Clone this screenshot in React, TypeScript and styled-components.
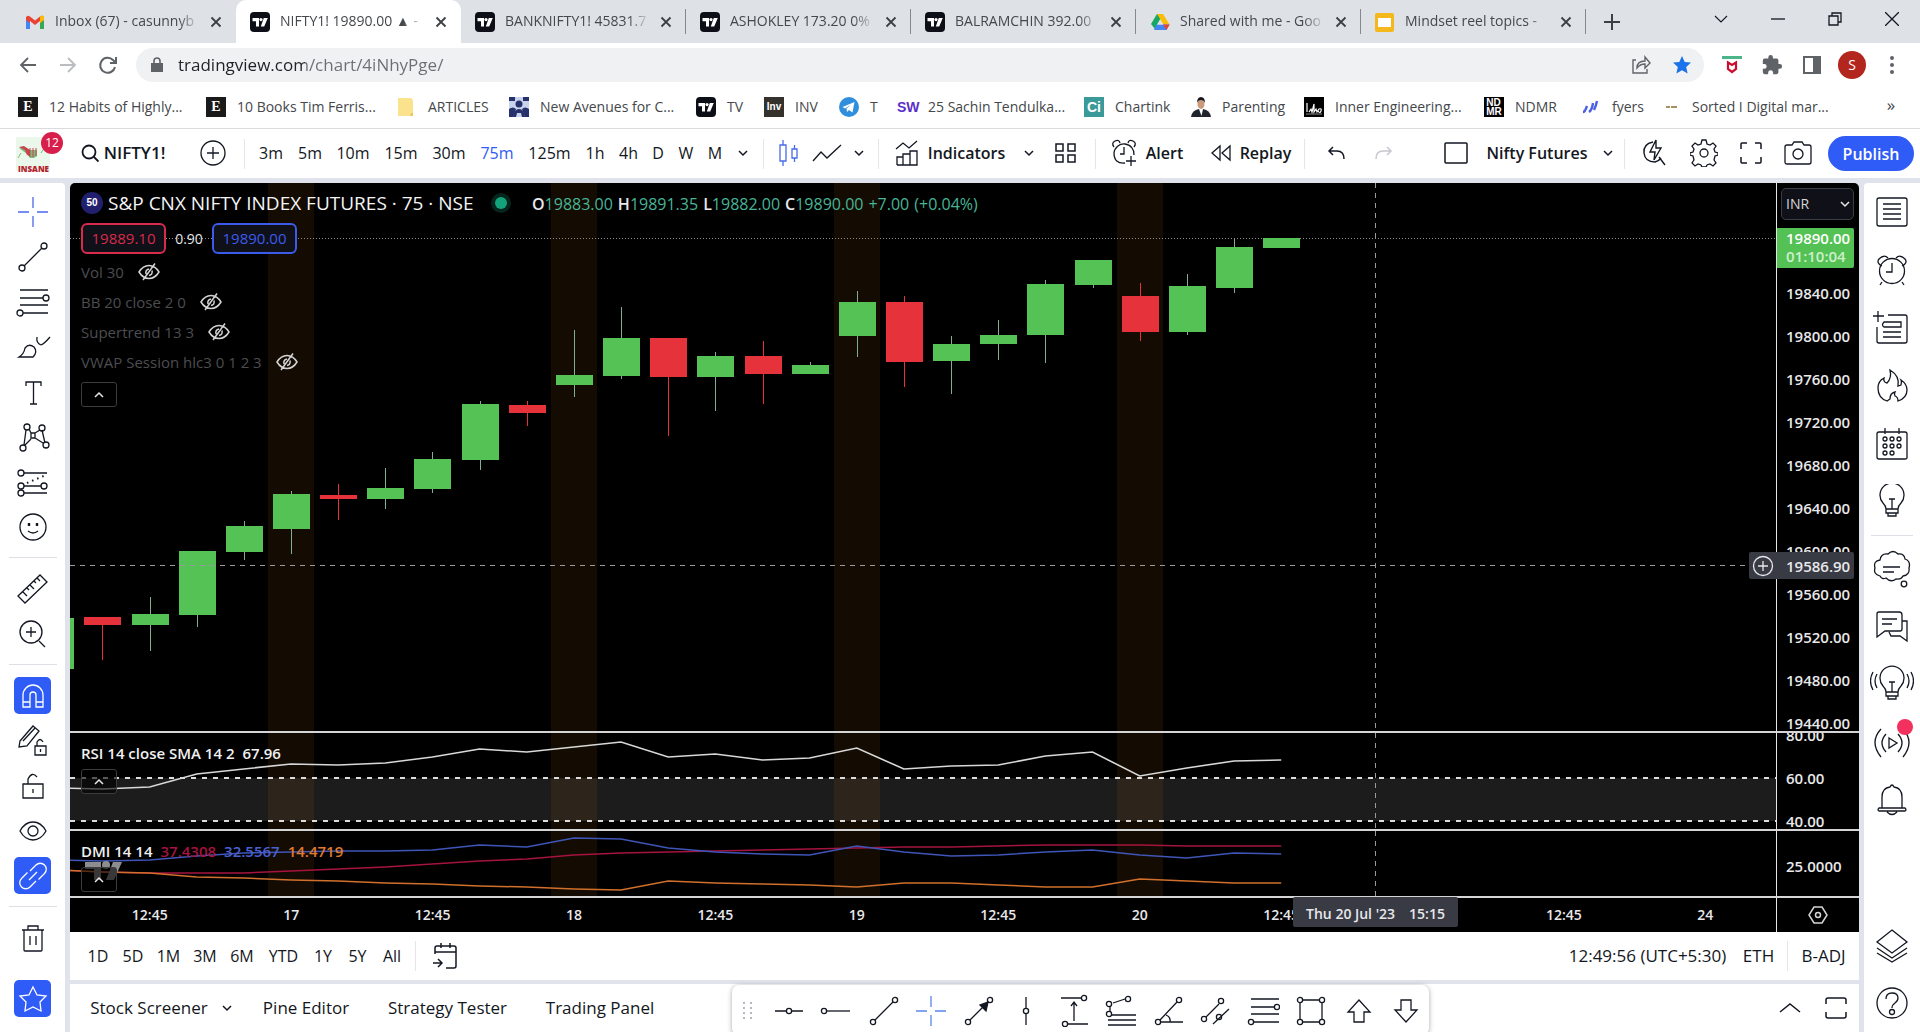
import React from 'react';
import styled, { createGlobalStyle, css } from 'styled-components';

const UI = '"Open Sans", "Noto Sans", sans-serif';
const INK = '#131722';
const BLUE = '#2f5bf6';

const Global = createGlobalStyle`
  *, *::before, *::after { box-sizing: border-box; }
  html, body, #root { height: 100%; }
  body { margin: 0; font-family: ${UI}; color: ${INK}; background: #e0e3eb; overflow: hidden; }
  button, input, select { font: inherit; color: inherit; background: none; border: 0; padding: 0; margin: 0; }
  a { color: inherit; text-decoration: none; }
  svg { display: block; flex: none; }
`;

/* ---------- icons ---------- */

type IcoProps = { w?: number; h?: number; c?: string; sw?: number; d?: string; children?: React.ReactNode };
const Ico = ({ w = 36, h = 36, c = 'currentColor', sw = 1.3, d, children }: IcoProps) => (
  <svg width={w} height={h} viewBox={`0 0 ${w} ${h}`} fill="none" stroke={c} strokeWidth={sw} aria-hidden="true">
    {d && <path d={d} />}
    {children}
  </svg>
);
const Dots = ({ at, r = 3 }: { at: number[][]; r?: number }) => (
  <>{at.map(([x, y]) => <circle key={`${x}-${y}`} cx={x} cy={y} r={r} />)}</>
);

const TvLogo = () => (
  <svg width="20" height="20" viewBox="0 0 20 20" aria-hidden="true">
    <rect width="20" height="20" rx="4" fill="#0c0f16" />
    <path d="M2.500 6h6.500v8.500H6V9.200H2.500z M13.800 6h4l-3.600 8.500h-3.400z" fill="#fff" />
    <circle cx="11" cy="7.600" r="1.600" fill="#fff" />
  </svg>
);
const Gmail = () => (
  <svg width="20" height="20" viewBox="0 0 20 20" aria-hidden="true">
    <path d="M1 5v12h4V8z" fill="#4285f4" />
    <path d="M19 5v12h-4V8z" fill="#34a853" />
    <path d="M1 8V5.500Q2 2.500 5 4.500L10 8.500l5-4q3-2 4 1V8l-4 3V9l-5 4-5-4v2z" fill="#ea4335" />
    <path d="M15 4.500q4-2.500 4 1V8l-4 3z" fill="#fbbc04" />
  </svg>
);
const Drive = () => (
  <svg width="20" height="20" viewBox="0 0 20 20" aria-hidden="true">
    <path d="M7 2h6l-2.500 5L5 17 1 12z" fill="#17a765" />
    <path d="M7 2h6l6.500 10.500h-6z" fill="#fbbc04" />
    <path d="M6.500 12.500h13L16.500 18H4z" fill="#4285f4" />
    <path d="M13 12.500h6.500L16.500 18z" fill="#ea4335" />
    <path d="M10 7.500l3 5H7z" fill="#dee1e6" />
  </svg>
);
const Slides = () => (
  <svg width="20" height="20" viewBox="0 0 20 20" aria-hidden="true">
    <rect x="0" y="1" width="19" height="19" rx="2" fill="#f4b81c" />
    <rect x="3" y="6" width="13" height="9" fill="#fff" />
  </svg>
);
const Folder = () => (
  <svg width="20" height="20" viewBox="0 0 20 20" aria-hidden="true">
    <path d="M1 1h13l2 2v13h-2v3H1z" fill="#fbe38e" />
    <path d="M14 16h2v3h-3z" fill="#e8c95c" />
  </svg>
);
const People = () => (
  <svg width="20" height="20" viewBox="0 0 20 20" aria-hidden="true">
    <rect width="20" height="20" fill="#c9d3ee" />
    <path d="M0 0h6v4H0zM14 0h6v4h-6zM0 20v-8q4-3 7 0l-3 8zM20 20v-8q-4-3-7 0l3 8z" fill="#27316b" />
    <circle cx="10" cy="7" r="3.500" fill="#27316b" /><path d="M4 20q1-8 6-8t6 8h-3l-1-4h-4l-1 4z" fill="#27316b" />
  </svg>
);
const Telegram = () => (
  <svg width="20" height="20" viewBox="0 0 20 20" aria-hidden="true">
    <circle cx="10" cy="10" r="10" fill="#2f8fdd" />
    <path d="M3.500 10L15.500 5l-2 10.500-3.500-2.500-2 2-.5-3.500 5-4-6.500 4z" fill="#fff" />
  </svg>
);
const Person = () => (
  <svg width="20" height="20" viewBox="0 0 20 20" aria-hidden="true">
    <path d="M0 20q1-7 8-8h4q7 1 8 8z" fill="#20242c" /><path d="M8 12h4l-1.500 7z" fill="#fff" />
    <ellipse cx="10" cy="7" rx="3.500" ry="5" fill="#c99a7c" /><path d="M6 6q0-6 4-6t4 6q-1-3-4-3T6 6z" fill="#15171c" />
  </svg>
);
const Isha = () => (
  <svg width="20" height="20" viewBox="0 0 20 20" aria-hidden="true">
    <rect width="20" height="20" fill="#000" />
    <path d="M3 6v9M5 15l2-3 1 3 2-8v8l2-3 1 3 2-3q3-1 2 2t-3 0" stroke="#fff" strokeWidth="1.200" fill="none" /><path d="M2 17h16" stroke="#888" />
  </svg>
);
const Fyers = () => (
  <svg width="20" height="20" viewBox="0 0 20 20" aria-hidden="true">
    <path d="M2 15q2 0 4-6M8 15q3-2 4-9M13 13q2-4 3-9" stroke="#4a5fe2" strokeWidth="2.400" fill="none" />
  </svg>
);
const Brand = () => (
  <svg width="34" height="34" viewBox="0 0 34 34" aria-hidden="true">
    <rect width="34" height="34" fill="#eaf7ea" />
    <path d="M3 11l5-1 4 3h9v6l-3 2h-4l-3-4z" fill="#7dbb7a" /><path d="M3 10l5-1 6 4v6l-3-1-2-5z" fill="#c8434d" />
    <path d="M14 11v9M17 11v9M20 11v8" stroke="#c8434d" />
    <path d="M5 16l-3 5M29 10l-4 6" stroke="#7dbb7a" />
  </svg>
);

/* ---------- browser chrome ---------- */

const Page = styled.div`display: flex; flex-direction: column; height: 100%; min-height: 1032px;`;
const TabStrip = styled.div`display: flex; align-items: stretch; height: 43px; background: #dee1e6; padding-left: 11px;`;
const Tab = styled.div<{ $on?: boolean }>`
  display: flex; align-items: center; gap: 10px; width: 225px; padding: 0 14px; position: relative;
  background: ${p => (p.$on ? '#fff' : 'transparent')};
  border-radius: 10px 10px 0 0;
  ${p => !p.$on && css`&:not(:first-child)::after { content: ''; position: absolute; right: 0; top: 9px; height: 25px; width: 1px; background: #85888d; }`}
`;
const TabTitle = styled.button`
  flex: 1; min-width: 0; overflow: hidden; white-space: nowrap; text-align: left; font-size: 14px; line-height: 24px; color: #45494d; padding-bottom: 2px;
  -webkit-mask-image: linear-gradient(90deg, #000 85%, transparent); mask-image: linear-gradient(90deg, #000 85%, transparent);
`;
const PlainBtn = styled.button`display: grid; place-items: center;`;
const NewTab = styled(PlainBtn)`width: 52px;`;
const WinControls = styled.div`margin-left: auto; display: flex; button { width: 57px; height: 37px; }`;

const AddressRow = styled.div`display: flex; align-items: center; height: 43px; background: #fff; padding: 0 8px;`;
const NavBtn = styled(PlainBtn)`width: 40px; height: 34px; color: #5f6368; &:disabled { color: #b9bcc0; }`;
const Omnibox = styled.label`
  flex: 1; display: flex; align-items: center; gap: 14px; height: 34px; margin: 0 8px; padding: 0 12px 0 14px; border-radius: 17px; background: #f0f1f3;
`;
const OmniActions = styled.span`display: flex; align-items: center; gap: 20px;`;
const UrlInput = styled.input`
  flex: 1; min-width: 0; height: 34px; font-size: 17px; outline: 0; color: transparent;
  background: linear-gradient(90deg, #202124 127px, #6b6f74 127px); -webkit-background-clip: text; background-clip: text;
`;
const Avatar = styled.button`width: 28px; height: 28px; border-radius: 50%; background: #b3261e; color: #fff; font-size: 14px; line-height: 28px; margin: 0 6px;`;

const Bookmarks = styled.nav`display: flex; align-items: center; height: 43px; padding: 0 0 1px 18px; background: #fff; border-bottom: 1px solid #d9dbdf;`;
const Bookmark = styled.a<{ $w: number }>`
  display: flex; align-items: center; gap: 11px; width: ${p => p.$w}px; flex: none; white-space: nowrap; font-size: 14px; line-height: 20px; color: #44474b;
`;
const LetterIcon = styled.span<{ $bg: string; $c?: string; $serif?: boolean; $small?: boolean }>`
  display: grid; place-items: center; align-content: center; width: 20px; height: 20px; background: ${p => p.$bg}; color: ${p => p.$c || '#fff'};
  font: bold ${p => (p.$small ? 10 : 14)}px / ${p => (p.$small ? 9 : 20)}px ${p => (p.$serif ? '"Liberation Serif", serif' : '"Liberation Sans", sans-serif')};
`;
const More = styled(PlainBtn)`margin-left: auto; width: 58px; font-size: 17px; line-height: 20px; padding-bottom: 3px; color: #44474b;`;

/* ---------- trading app ---------- */

const Workspace = styled.div`flex: 1; min-height: 0; display: flex; flex-direction: column;`;
const TopBar = styled.header`display: flex; align-items: center; height: 49px; background: #fff; margin-bottom: 5px; padding-right: 6px;`;
const Cell = styled.button<{ $w: number; $on?: boolean; $big?: boolean; $tight?: boolean }>`
  display: flex; align-items: center; justify-content: center; gap: ${p => (p.$tight ? 5 : 9)}px; flex: none; width: ${p => p.$w}px; height: 42px; padding-bottom: 1px; white-space: nowrap;
  font-size: ${p => (p.$big ? 17 : 16)}px; line-height: 24px; color: ${p => (p.$on ? BLUE : INK)};
  &:disabled { color: #c5c8d0; }
`;
const Strong = styled.span`font-weight: 600;`;
const Rule = styled.span<{ $gap?: boolean }>`width: 1px; height: 30px; flex: none; background: #e4e6ec; margin-left: ${p => (p.$gap ? 6 : 0)}px;`;
const Grow = styled.span`flex: 1;`;
const BrandBtn = styled.button`position: relative; width: 64px; height: 40px; padding-left: 16px; text-align: left; flex: none;`;
const BrandName = styled.span`position: absolute; left: 18px; bottom: 1px; font-size: 8px; line-height: 8px; font-weight: 800; color: #b3202c;`;
const Badge = styled.span`
  position: absolute; left: 41px; top: -2px; width: 22px; height: 22px; border-radius: 50%; background: #d81e4a; color: #fff;
  font-size: 12px; line-height: 22px; text-align: center;
`;
const Publish = styled.button`height: 35px; width: 86px; border-radius: 18px; background: ${BLUE}; color: #fff; font-size: 16px; font-weight: 600; flex: none; margin-left: 9px;`;

const Body = styled.div`flex: 1; min-height: 0; display: flex; gap: 5px;`;
const LeftBar = styled.aside`width: 65px; flex: none; background: #fff; display: flex; flex-direction: column; align-items: center; padding: 6px 0 11px; border-top-right-radius: 4px;`;
const Tool = styled.button<{ $on?: boolean; $c?: string }>`
  flex: none; height: 45px; width: 37px; display: grid; place-items: center; color: ${p => (p.$on ? '#fff' : p.$c || INK)};
  span { display: grid; place-items: center; width: 37px; height: 37px; border-radius: 5px; background: ${p => (p.$on ? BLUE : 'none')}; }
`;
const HRule = styled.hr`width: 48px; height: 1px; border: 0; margin: 8px 0; background: #dcdfe5; flex: none;`;
const SideRule = styled(HRule)`width: 42px; margin: 4px 0;`;
const RightBar = styled.aside`width: 56px; flex: none; background: #fff; display: flex; flex-direction: column; align-items: center; border-top-left-radius: 4px;`;
const SideBtn = styled.button`position: relative; flex: none; height: 58px; width: 56px; display: grid; place-items: center;`;
const LiveDot = styled.i`position: absolute; right: 7px; top: 5px; width: 16px; height: 16px; border-radius: 50%; background: #f2315f;`;

const Center = styled.main`flex: 1; min-width: 0; display: flex; flex-direction: column;`;
const Chart = styled.section`
  flex: 1; min-height: 0; display: grid; grid-template-columns: minmax(0, 1fr) 83px; grid-template-rows: minmax(0, 1fr) 98px 67px 34px;
  background: #000; color: #e8e8ea; border-radius: 5px 5px 0 0; overflow: hidden; position: relative;
`;
const Pane = styled.div`position: relative; overflow: hidden; border-bottom: 2px solid #d5d5d7;`;
const Axis = styled.div`border-left: 1px solid #e4e4e6; border-bottom: 2px solid #d5d5d7; overflow: hidden; font-size: 15px; line-height: 43px;`;
const RsiAxis = styled(Axis)`padding-top: 24px; > :first-child { margin-top: -43px; }`;
const Plot = styled.svg`position: absolute; inset: 0; width: 100%; height: 100%;`;
const AxisRow = styled.div<{ $tall?: boolean }>`height: 43px; padding-left: 9px; font-weight: 600; line-height: ${p => (p.$tall ? 70 : 43)}px;`;
const Currency = styled.label`display: block; height: 32px; margin: 5px 5px 8px 4px; position: relative; svg { position: absolute; right: 3px; top: 10px; pointer-events: none; }`;
const CurrencySelect = styled.select`
  display: block; appearance: none; width: 100%; height: 32px; border: 1px solid #3a3d47; border-radius: 5px; background: #0f1018; color: #d5d6da; padding-left: 4px; font-size: 14px; line-height: 20px;
`;
const LastPrice = styled.div`height: 40px; margin: 0 5px 4px 0; padding: 1px 0 0 9px; background: #53c153; color: #fff; font-weight: 600; line-height: 18px; border-radius: 0 2px 2px 0; div + div { color: #cdf0cd; }`;
const Legend = styled.div`position: relative; padding: 4px 0 0 11px; display: flex; flex-direction: column; align-items: flex-start;`;
const LegendTop = styled.div`display: flex; align-items: center; height: 32px;`;
const Fifty = styled.span`width: 22px; height: 22px; border-radius: 50%; background: #221f6e; color: #fff; font: bold 10px/22px "Liberation Sans", sans-serif; text-align: center;`;
const Title = styled.h1`margin: 0 0 0 5px; font-size: 19px; line-height: 30px; font-weight: 500; color: #f4f4f6; width: 387px; white-space: nowrap;`;
const Status = styled.i`width: 12px; height: 12px; border-radius: 50%; background: #12a37a; box-shadow: 0 0 0 4px #06261d; margin-right: 25px;`;
const Ohlc = styled.div`display: flex; gap: 5px; font-size: 16px; line-height: 20px; color: #47b596; white-space: nowrap; padding-top: 2px; b { font-weight: 600; color: #e8e8ea; }`;
const Quote = styled.div`display: flex; align-items: center; height: 38px; font-size: 15px; color: #e4e4e6; > span { width: 46px; text-align: center; font-size: 14px; }`;
const QuoteBox = styled.button<{ $c: string }>`width: 85px; height: 31px; border: 2px solid ${p => p.$c}; border-radius: 6px; background: #0f1018; color: ${p => p.$c}; font-size: 15px; line-height: 24px;`;
const Study = styled.div`display: flex; align-items: center; gap: 14px; height: 30px; font-size: 15px; color: #4c4d50; > svg { color: #d4d4d6; }`;
const Collapse = styled.button`display: grid; place-items: center; width: 36px; height: 25px; border: 1px solid #3b3c40; border-radius: 3px; background: rgba(0,0,0,.6); color: #e8e8ea; margin-top: 5px;`;
const SubLegend = styled.div`position: relative; padding: 9px 0 0 11px; font-size: 15px; line-height: 22px; font-weight: 600; color: #f0f0f2; white-space: nowrap;`;
const Num = styled.span<{ $c?: string }>`margin-left: 8px; color: ${p => p.$c || 'inherit'};`;
const DmiMark = styled.svg`position: absolute; left: 15px; top: 30px;`;
const TimeAxis = styled.div`display: flex; padding-left: 9px; font-size: 14px; line-height: 34px; font-weight: 600; span { flex: 1; text-align: center; }`;
const AxisCorner = styled.div`border-left: 1px solid #e4e4e6; display: grid; place-items: center; color: #d5d5d7;`;
const CrossPrice = styled.div`
  position: absolute; right: 5px; top: 369px; width: 105px; height: 27px; display: flex; align-items: center; gap: 10px; background: #383a44; font-size: 15px; line-height: 24px; font-weight: 600; border-radius: 2px;
  button { width: 27px; height: 27px; }
`;
const CrossTime = styled.div`position: absolute; left: 1223px; top: 714px; width: 165px; height: 30px; background: #383a44; border-radius: 2px; display: flex; justify-content: center; gap: 14px; font-size: 14px; line-height: 34px; font-weight: 600;`;

const RangeBar = styled.div`display: flex; align-items: center; height: 48px; background: #fff; padding-left: 10px;`;
const Bottom = styled.footer`position: relative; display: flex; align-items: center; height: 48px; margin-top: 4px; background: #fff; padding-left: 13px;`;
const Floating = styled.div`
  position: absolute; left: 662px; top: 1px; width: 697px; height: 50px; padding-left: 6px; background: #fff; border-radius: 7px; box-shadow: 0 1px 5px rgba(0,0,0,.35);
  display: flex; align-items: center;
`;
const FloatBtn = styled(PlainBtn)<{ $c?: string }>`flex: 1; height: 46px; color: ${p => p.$c || INK};`;
const Grip = styled.span`width: 26px; display: grid; place-items: center start; padding-left: 4px;`;

const Chev = ({ up = false }: { up?: boolean }) => <Ico w={12} h={12} sw={1.5} d={up ? 'M2 8l4-4 4 4' : 'M2 4l4 4 4-4'} />;
const Cross = () => <Ico w={12} h={12} c="#3c4043" sw={1.8} d="M1.500 1.500l9 9M10.500 1.500l-9 9" />;
const HiddenEye = () => <Ico w={22} h={20} sw={1.5} d="M1 10q4-6.500 10-6.500t10 6.500q-4 6.500-10 6.500T1 10z M5 18L17 1.500M8 12q-1-4 3-5M14 8.500q1 4-3 5" />;

/* ---------- chart data ---------- */

const STEP = 47.15;
const cx = (i: number) => 291 + i * STEP;
/* [slot, body top, body bottom, high, low, up] */
const candles: [number, number, number, number, number, boolean][] = [
  [-5, 618, 669, 618, 669, true], [-4, 617, 625, 617, 660, false], [-3, 614, 625, 597, 651, true], [-2, 551, 615, 551, 627, true],
  [-1, 526, 552, 521, 560, true], [0, 494, 529, 491, 554, true], [1, 495, 499, 484, 520, false], [2, 488, 499, 468, 509, true],
  [3, 459, 489, 452, 493, true], [4, 404, 460, 401, 470, true], [5, 405, 413, 401, 426, false], [6, 375, 385, 330, 397, true],
  [7, 338, 376, 307, 379, true], [8, 338, 377, 338, 436, false], [9, 356, 377, 352, 411, true], [10, 356, 374, 341, 404, false],
  [11, 365, 374, 362, 374, true], [12, 302, 336, 291, 357, true], [13, 302, 362, 296, 387, false], [14, 344, 361, 336, 394, true],
  [15, 335, 344, 320, 360, true], [16, 284, 335, 280, 363, true], [17, 260, 285, 260, 288, true], [18, 296, 332, 283, 341, false],
  [19, 286, 332, 274, 335, true], [20, 247, 288, 239, 293, true], [21, 238, 248, 238, 248, true],
];
const rsi = [788, 789, 787, 774, 769, 764, 765, 763, 757, 749, 752, 747, 742, 757, 754, 760, 758, 748, 769, 766, 765, 756, 752, 776, 768, 761, 760];
const plus = [860, 861, 860, 856, 853, 852, 851, 851, 850, 845, 847, 838, 839, 848, 852, 854, 855, 846, 852, 856, 855, 852, 850, 855, 858, 853, 854];
const adx = [870, 872, 873, 873, 873, 871, 869, 867, 864, 861, 859, 855, 853, 852, 851, 850, 849, 848, 847, 847, 846, 845, 845, 845, 846, 846, 846];
const minus = [870, 872, 873, 877, 878, 880, 881, 883, 884, 886, 887, 889, 890, 881, 883, 884, 885, 887, 883, 883, 885, 887, 887, 879, 881, 883, 883];
const line = (ys: number[]) => ys.map((y, i) => `${cx(i - 5).toFixed(1)},${y}`).join(' ');
const Sessions = () => <>{[0, 6, 12, 18].map(i => <rect key={i} x={Math.round(cx(i)) - 23} y="0" width="46" height="1000" fill="#ff9a1f" fillOpacity=".08" />)}</>;

const prices = ['19840.00', '19800.00', '19760.00', '19720.00', '19680.00', '19640.00', '19600.00', '19560.00', '19520.00', '19480.00', '19440.00'];
const times = ['12:45', '17', '12:45', '18', '12:45', '19', '12:45', '20', '12:45', '', '12:45', '24'];

const tabs = [
  { icon: <Gmail />, t: 'Inbox (67) - casunnyb' }, { icon: <TvLogo />, t: 'NIFTY1! 19890.00 ▲ -', on: true },
  { icon: <TvLogo />, t: 'BANKNIFTY1! 45831.7' }, { icon: <TvLogo />, t: 'ASHOKLEY 173.20 0%' }, { icon: <TvLogo />, t: 'BALRAMCHIN 392.00' },
  { icon: <Drive />, t: 'Shared with me - Goo' }, { icon: <Slides />, t: 'Mindset reel topics -' },
];
const marks: [React.ReactNode, string, number][] = [
  [<LetterIcon $bg="#1a1a1a" $serif>E</LetterIcon>, '12 Habits of Highly...', 188],
  [<LetterIcon $bg="#1a1a1a" $serif>E</LetterIcon>, '10 Books Tim Ferris...', 191],
  [<Folder />, 'ARTICLES', 112], [<People />, 'New Avenues for C...', 187], [<TvLogo />, 'TV', 68],
  [<LetterIcon $bg="#35322e" $small>Inv</LetterIcon>, 'INV', 75], [<Telegram />, 'T', 58],
  [<LetterIcon $bg="none" $c="#5b2fc9">SW</LetterIcon>, '25 Sachin Tendulka...', 187], [<LetterIcon $bg="#3a9a9a">Ci</LetterIcon>, 'Chartink', 107],
  [<Person />, 'Parenting', 113], [<Isha />, 'Inner Engineering...', 180], [<LetterIcon $bg="#000" $small>ND<br />MR</LetterIcon>, 'NDMR', 97],
  [<Fyers />, 'fyers', 80], [<Ico w={20} h={20} c="#a89060" sw={2} d="M5 10h4M10 10h6" />, 'Sorted I Digital mar...', 180],
];

const cross = 'M18 3v11M18 22v11M3 18h11M22 18h11';
const bulb = 'M12 25q0-3-3-6a12 12 0 1 1 18 0q-3 3-3 6zM12 25h12v4H12zM14 29v3h8v-3M15 15h6M18 15v10';

const tools: { n: string; d?: string; dots?: number[][]; on?: boolean; c?: string; extra?: React.ReactNode; rule?: boolean }[] = [
  { n: 'Cross', d: cross, c: '#4a6ae8' },
  { n: 'Trend line', d: 'M9 27L27 9', dots: [[7, 29], [29, 7]] },
  { n: 'Fibonacci', d: 'M5 6h28M5 14h23M5 21h28M8 29h25', dots: [[31, 14], [5, 29]] },
  { n: 'Brush', d: 'M4 28q5-3 6-9 4-5 9-1 4 5-1 10zM22 8q-1 6 4 8M26 16q3-1 9-8' },
  { n: 'Text', d: 'M11 12V8h15v4M18.500 8v22M15 30h7' },
  { n: 'Patterns', d: 'M11 11l-2 15M27 11l3 13M14 10l2 4M25 11l-5 3M10 26l6-6M28 24l-8-5M16 14h4v5h-4z', dots: [[12, 8], [27, 9], [8, 29], [31, 26]] },
  { n: 'Forecast', d: 'M9 9h23M9 22h17M9 29h23', dots: [[6, 9], [6, 22], [29, 22], [6, 29]], extra: <path d="M12 19L31 11" strokeDasharray="1.500 4" strokeWidth="2" /> },
  { n: 'Icons', d: 'M13 22q5 4 10 0', dots: [], extra: <><circle cx="18" cy="18" r="13" /><path d="M14 14v3M22 14v3" strokeWidth="2.400" /></>, rule: true },
  { n: 'Measure', d: 'M3 25L25 4l7 7L10 32zM8 21l4 4M12 17l2 2M15 14l4 4M19 10l2 2M22 7l3 3' },
  { n: 'Zoom in', d: 'M24 25l6 6M16 11v10M11 16h10', extra: <circle cx="16" cy="16" r="11" />, rule: true },
  { n: 'Magnet', on: true, d: 'M8 29V17a10 10 0 0 1 20 0v12h-7V17a3 3 0 0 0-6 0v12zM8 24h7M21 24h7' },
  { n: 'Stay in drawing mode', d: 'M5 18L18 3l6 5-12 15-8 1zM8 18L20 5M20 23h11v9H20zM22 23v-4q3-5 6 0M25.500 26v3' },
  { n: 'Lock all', d: 'M8 16h20v14H8zM13 16v-5q4-8 9-2M18 21v4' },
  { n: 'Hide all', d: 'M5 18q5-9 13-9t13 9q-5 9-13 9T5 18z', extra: <circle cx="18" cy="18" r="5" /> },
  { n: 'Link', on: true, d: 'M15 13l6-6a6 6 0 0 1 8.500 8.500l-6 6M21 23l-6 6a6 6 0 0 1-8.500-8.500l6-6M14 22l8-8', rule: true },
];

const floats: [string, string, number[][]][] = [
  ['Horizontal line', 'M4 18h11M21 18h11', [[18, 18]]],
  ['Horizontal ray', 'M9 18h23', [[6, 18]]],
  ['Trend line', 'M9 27L27 9', [[7, 29], [29, 7]]],
  ['Cross', cross, []],
  ['Arrow', 'M9 27L27 9', [[7, 29], [29, 7]]],
  ['Vertical line', 'M18 4v11M18 21v11', [[18, 18]]],
  ['Price range', 'M5 5h20M12 31h20M18 10v18M15 13l3-4 3 4', [[28, 5], [9, 31]]],
  ['Fib extension', 'M10 10l12-4M7 13v6M9 22h24M5 27h28M5 32h28', [[25, 6], [6, 11], [6, 21]]],
  ['Angle', 'M9 27L26 9M9 29h23M15 22q5 2 4 7', [[7, 29], [28, 7]]],
  ['Channel', 'M8 24L21 11M15 31L31 16', [[6, 26], [23, 8], [21, 24]]],
  ['Fib retracement', 'M5 6h28M5 14h23M5 21h28M8 29h25', [[31, 14], [5, 29]]],
  ['Rectangle', 'M10 7h16M10 29h16M7 10v16M29 10v16', [[7, 7], [29, 7], [7, 29], [29, 29]]],
  ['Arrow up', 'M18 7l11 12h-6v10H13V19H7z', []],
  ['Arrow down', 'M18 29l11-12h-6V7H13v10H7z', []],
];

const side: [string, React.ReactNode][] = [
  ['Watchlist', <Ico d="M5 4h26q2 0 2 2v24q0 2-2 2H5q-2 0-2-2V6q0-2 2-2zM9 10h18M9 15h18M9 20h18M9 25h18" />],
  ['Alerts', <Ico d="M18 11v9h-6M8 30l-2 3M28 30l2 3M8 14q-6-3-3-7 5-5 9-1M28 14q6-3 3-7-5-5-9-1"><circle cx="18" cy="19" r="12.500" /></Ico>],
  ['Data window', <Ico w={44} d="M18 5h17q2 0 2 2v24q0 2-2 2H9q-2 0-2-2V17M8 1v11M3 6h11M14 12h17v5H14q-3-2 0-5zM13 22h18M13 27h18" />],
  ['Hotlists', <Ico d="M13 33Q4 30 4 20q0-7 6-10-1 4 3 5 5-5 3-13 10 6 8 16l3-1q1-3 0-5 6 4 6 10 0 8-9 11 0-4-3-5-1-2 0-4-5 1-5 7z" />],
  ['Calendar', <Ico d="M5 6h26q2 0 2 2v24q0 1-2 1H5q-2 0-2-2V8q0-2 2-2zM11 2v6M25 2v6"><Dots r={2} at={[[11, 13], [18, 13], [25, 13], [11, 20], [18, 20], [25, 20], [11, 27], [18, 27]]} /></Ico>],
  ['Ideas', <Ico d={bulb} />],
];
const side2: [string, React.ReactNode][] = [
  ['Minds', <Ico w={40} h={40} d="M14 29q-4 2-6-2-7-2-5-8-2-7 5-8 1-7 8-6 5-5 10 0 6-1 7 5 6 2 4 9 1 7-6 8-2 4-7 3-5 4-10-1zM11 18h17M11 23h11"><circle cx="32" cy="35" r="2.800" /></Ico>],
  ['Chats', <Ico d="M5 3h20q3 0 3 3v14q0 2-2 2H11l-8 6V5q0-2 2-2zM8 10h15M8 15h10M28 12h5v20l-7-5H17l-2-4" />],
  ['Idea stream', <Ico w={44} h={40} d="M16 27q0-3-3-6a12 12 0 1 1 18 0q-3 3-3 6zM16 27h12v4H16zM18 31v3h8v-3M19 17h6M22 17v10M7 9q-4 7 0 14M3 7q-5 9 0 18M37 9q4 7 0 14M41 7q5 9 0 18" />],
  ['Live streams', <Ico w={44} h={40} d="M11 6q-12 13 0 28M16 11q-8 9 0 18M33 6q12 13 0 28M28 11q8 9 0 18M19 15l8 5-8 5z" />],
  ['Notifications', <Ico d="M8 25V14q0-9 8-10 2-4 4 0 8 1 8 10v11M5 25h26q2 2 0 3H5q-2-1 0-3zM13 29q5 5 10 0" />],
];

export default function App() {
  return (
    <Page>
      <Global />
      <TabStrip>
        {tabs.map(t => (
          <Tab key={t.t} $on={t.on}>{t.icon}<TabTitle>{t.t}</TabTitle><PlainBtn aria-label="Close tab"><Cross /></PlainBtn></Tab>
        ))}
        <NewTab aria-label="New tab"><Ico w={16} h={16} c="#3c4043" sw={2} d="M8 0v16M0 8h16" /></NewTab>
        <WinControls>
          <PlainBtn aria-label="Search tabs"><Ico w={14} h={12} sw={1.1} d="M1 3l6 6 6-6" /></PlainBtn>
          <PlainBtn aria-label="Minimize"><Ico w={14} h={12} d="M0 6h14" /></PlainBtn>
          <PlainBtn aria-label="Restore"><Ico w={14} h={14} d="M1 4h9v9H1zM4 4V1h9v9h-3" /></PlainBtn>
          <PlainBtn aria-label="Close"><Ico w={14} h={14} d="M0 0l14 14M14 0L0 14" /></PlainBtn>
        </WinControls>
      </TabStrip>
      <AddressRow>
        <NavBtn aria-label="Back"><Ico w={20} h={20} sw={1.8} d="M18 10H3M10 3l-7 7 7 7" /></NavBtn>
        <NavBtn aria-label="Forward" disabled><Ico w={20} h={20} sw={1.8} d="M2 10h15M10 3l7 7-7 7" /></NavBtn>
        <NavBtn aria-label="Reload"><Ico w={20} h={20} sw={2} d="M17 12a7.500 7.500 0 1 1-2-7l3 3M18 2v6h-6" /></NavBtn>
        <Omnibox>
          <svg width="14" height="16" viewBox="0 0 14 16" aria-hidden="true"><path d="M1 6h12v9H1z" fill="#5f6368" /><path d="M4 6V4a3 3 0 0 1 6 0v2" fill="none" stroke="#5f6368" strokeWidth="1.600" /></svg>
          <UrlInput aria-label="Address" defaultValue="tradingview.com/chart/4iNhyPge/" />
          <OmniActions>
            <Ico w={20} h={20} c="#5f6368" sw={1.4} d="M4 5H1v13h14v-4M5 13q0-7 8-7V2l5 6-5 5V9q-5 0-8 4z" />
            <svg width="20" height="20" viewBox="0 0 20 20" aria-hidden="true"><path d="M10 1l2.700 6 6.300.6-4.800 4.400 1.400 6.500L10 15.200 4.400 18.500 5.800 12 1 7.600 7.300 7z" fill="#1a73e8" /></svg>
          </OmniActions>
        </Omnibox>
        <NavBtn aria-label="McAfee">
          <svg width="20" height="24" viewBox="0 0 20 24" aria-hidden="true"><path d="M0 3h20v3H0z" fill="#4db58a" /><path d="M6 9.500l4 2.500 4-2.500V16l-4 3-4-3z" fill="none" stroke="#c8102e" strokeWidth="2.200" /></svg>
        </NavBtn>
        <NavBtn aria-label="Extensions">
          <svg width="22" height="22" viewBox="0 0 24 24" aria-hidden="true"><path d="M20.500 11H19V7a2 2 0 0 0-2-2h-4V3.500a2.500 2.500 0 0 0-5 0V5H4a2 2 0 0 0-2 2v3.800h1.500a2.700 2.700 0 0 1 0 5.400H2V20a2 2 0 0 0 2 2h3.800v-1.500a2.700 2.700 0 0 1 5.400 0V22H17a2 2 0 0 0 2-2v-4h1.500a2.500 2.500 0 0 0 0-5z" fill="#5f6368" /></svg>
        </NavBtn>
        <NavBtn aria-label="Side panel">
          <svg width="20" height="20" viewBox="0 0 20 20" aria-hidden="true"><path d="M2 2h16v16H2z" fill="none" stroke="#5f6368" strokeWidth="2" /><path d="M11 2h7v16h-7z" fill="#5f6368" /></svg>
        </NavBtn>
        <Avatar aria-label="Profile">S</Avatar>
        <NavBtn aria-label="Menu"><svg width="6" height="20" viewBox="0 0 6 20" fill="#5f6368" aria-hidden="true"><circle cx="3" cy="3" r="2" /><circle cx="3" cy="10" r="2" /><circle cx="3" cy="17" r="2" /></svg></NavBtn>
      </AddressRow>
      <Bookmarks aria-label="Bookmarks">
        {marks.map(([ic, t, w]) => <Bookmark key={t} href="#" $w={w}>{ic}{t}</Bookmark>)}
        <More aria-label="More bookmarks">»</More>
      </Bookmarks>

      <Workspace>
        <TopBar>
          <BrandBtn aria-label="Account"><Brand /><BrandName>INSANE</BrandName><Badge>12</Badge></BrandBtn>
          <Cell $w={118} $tight $big><Ico w={18} h={20} sw={1.8} d="M12.500 13.500l5 5"><circle cx="8" cy="9" r="6.500" /></Ico><Strong>NIFTY1!</Strong></Cell>
          <Cell $w={62} aria-label="Compare"><Ico w={26} h={26} d="M13 7v12M7 13h12"><circle cx="13" cy="13" r="12" /></Ico></Cell>
          <Rule />
          <Cell $w={52}>3m</Cell><Cell $w={26}>5m</Cell><Cell $w={60}>10m</Cell><Cell $w={36}>15m</Cell><Cell $w={60}>30m</Cell>
          <Cell $w={36} $on>75m</Cell><Cell $w={69}>125m</Cell><Cell $w={22}>1h</Cell><Cell $w={45}>4h</Cell><Cell $w={14}>D</Cell>
          <Cell $w={42}>W</Cell><Cell $w={16}>M</Cell><Cell $w={40} aria-label="Intervals"><Chev /></Cell>
          <Rule />
          <Cell $w={50} aria-label="Candles"><Ico w={20} h={28} c="#4a6ae8" d="M1 6h6v16H1zM4 1v5M4 22v5M13 10h5v9h-5zM15.500 6v4M15.500 19v4" /></Cell>
          <Cell $w={26} aria-label="Line style"><Ico w={30} h={20} d="M1 18l8-9 6 6L29 2" /></Cell>
          <Cell $w={38} aria-label="Chart types"><Chev /></Cell>
          <Rule />
          <Cell $w={142}><Ico w={24} h={26} d="M1 9l7-6 6 5 8-7M2 25v-8h6v8M8 25V14h7v11M15 25V11h7v14zM2 25h20" /><Strong>Indicators</Strong></Cell>
          <Cell $w={16} aria-label="Favorite indicators"><Chev /></Cell>
          <Cell $w={58} aria-label="Templates"><Ico w={22} h={22} sw={1.5} d="M1 2h7v7H1zM13 2h7v7h-7zM1 13h7v7H1zM13 13h7v7h-7z" /></Cell>
          <Rule />
          <Cell $w={102}><Ico w={26} h={28} d="M13 8v7H9M14 24q-11 1-11-10a10 10 0 0 1 20 2M3 8q-3-4 1-6 4-2 5 2M23 8q3-4-1-6-4-2-5 2M20 17v10M15 22h10" /><Strong>Alert</Strong></Cell>
          <Cell $w={106}><Ico w={20} h={20} d="M9 3v14l-8-7zM19 3v14l-8-7z" /><Strong>Replay</Strong></Cell>
          <Rule />
          <Cell $w={62} aria-label="Undo"><Ico w={18} h={18} sw={1.5} d="M6 3L2 7l4 4M2 7h8q7 0 7 8" /></Cell>
          <Cell $w={34} aria-label="Redo" disabled><Ico w={18} h={18} sw={1.5} d="M12 3l4 4-4 4M16 7H8q-7 0-7 8" /></Cell>
          <Grow />
          <Cell $w={52} aria-label="Layout"><Ico w={26} h={26} sw={1.5} d="M3 3h20q1 0 1 1v18q0 1-1 1H3q-1 0-1-1V4q0-1 1-1z" /></Cell>
          <Cell $w={110}><Strong>Nifty Futures</Strong></Cell>
          <Cell $w={32} aria-label="Layouts"><Chev /></Cell>
          <Rule />
          <Cell $w={58} aria-label="Quick search"><Ico w={26} h={28} sw={1.4} d="M12 3Q2 5 3 14t11 9q4-1 6-4M18 18l6 8M15 1L9 13h5l-1 8 7-12h-5z" /></Cell>
          <Cell $w={42} aria-label="Settings"><Ico w={28} h={28} d="M12 1h4l1 4 3 1 3-2 3 3-2 3 1 3 3 1v2l-3 1-1 4 2 3-3 3-3-2-3 1-1 2h-4l-1-2-3-1-3 2-3-3 2-3-1-4-3-1v-2l3-1 1-3-2-3 3-3 3 2 3-1z"><circle cx="14" cy="14" r="4" /></Ico></Cell>
          <Cell $w={52} aria-label="Fullscreen"><Ico w={24} h={24} sw={1.5} d="M2 8V3q0-1 1-1h5M16 2h5q1 0 1 1v5M22 16v5q0 1-1 1h-5M8 22H3q-1 0-1-1v-5" /></Cell>
          <Cell $w={42} aria-label="Snapshot"><Ico w={28} h={26} d="M3 5h5l2-3h8l2 3h5q2 0 2 2v15q0 2-2 2H3q-2 0-2-2V7q0-2 2-2z"><circle cx="14" cy="14" r="5" /></Ico></Cell>
          <Publish>Publish</Publish>
        </TopBar>

        <Body>
          <LeftBar>
            {tools.map(t => (
              <React.Fragment key={t.n}>
                <Tool aria-label={t.n} $on={t.on} $c={t.c}><span><Ico d={t.d}>{t.dots && <Dots at={t.dots} />}{t.extra}</Ico></span></Tool>
                {t.rule && <HRule />}
              </React.Fragment>
            ))}
            <Tool aria-label="Remove drawings"><span><Ico d="M7 10h22M13 10V6h10v4M9 10v20q0 1 1 1h16q1 0 1-1V10M15 16v9M21 16v9" /></span></Tool>
            <Grow />
            <Tool aria-label="Favorites toolbar" $on><span><Ico d="M18 6l4 8 9 1-6 6 1 9-8-4-8 4 1-9-6-6 9-1z" /></span></Tool>
          </LeftBar>

          <Center>
            <Chart>
              <Pane>
                <Plot>
                  <g transform="translate(-70 -183)">
                    <Sessions />
                    <path d="M70 238.500H1800" stroke="#8d8d8d" strokeDasharray="1 2" />
                    {candles.map(([i, t, b, h, l, up]) => (
                      <g key={i} fill={up ? '#54c254' : '#e6323a'}>
                        <rect x={Math.round(cx(i))} y={h} width="1" height={l - h} fill={up ? '#7fae93' : '#e6323a'} />
                        <rect x={Math.round(cx(i)) - 18} y={t} width="37" height={b - t} />
                      </g>
                    ))}
                    <path d="M70 565.500H1776M1375.500 183V740" stroke="#9a9a9c" strokeDasharray="5 5" />
                  </g>
                </Plot>
                <Legend>
                  <LegendTop>
                    <Fifty>50</Fifty><Title>S&amp;P CNX NIFTY INDEX FUTURES · 75 · NSE</Title><Status />
                    <Ohlc>
                      <span><b>O</b>19883.00</span><span><b>H</b>19891.35</span><span><b>L</b>19882.00</span><span><b>C</b>19890.00</span><span>+7.00</span><span>(+0.04%)</span>
                    </Ohlc>
                  </LegendTop>
                  <Quote><QuoteBox $c="#d92b4b">19889.10</QuoteBox><span>0.90</span><QuoteBox $c="#3c5bea">19890.00</QuoteBox></Quote>
                  {['Vol 30', 'BB 20 close 2 0', 'Supertrend 13 3', 'VWAP Session hlc3 0 1 2 3'].map(s => <Study key={s}>{s}<HiddenEye /></Study>)}
                  <Collapse aria-label="Collapse legend"><Chev up /></Collapse>
                </Legend>
              </Pane>
              <Axis>
                <Currency>
                  <CurrencySelect aria-label="Currency" defaultValue="INR"><option>INR</option></CurrencySelect><Chev />
                </Currency>
                <LastPrice><div>19890.00</div><div>01:10:04</div></LastPrice>
                {prices.map(p => <AxisRow key={p}>{p}</AxisRow>)}
              </Axis>

              <Pane>
                <Plot>
                  <g transform="translate(-70 -733)">
                    <rect x="70" y="778" width="1720" height="43" fill="#1c1c1c" />
                    <Sessions />
                    <path d="M70 778H1790M70 821H1790" stroke="#dcdcdc" strokeWidth="2" strokeDasharray="5 6" />
                    <polyline points={line(rsi)} fill="none" stroke="#d8d8d8" strokeWidth="1.600" />
                    <path d="M1375.500 733V831" stroke="#9a9a9c" strokeDasharray="5 5" />
                  </g>
                </Plot>
                <SubLegend>RSI 14 close SMA 14 2<Num>67.96</Num><Collapse aria-label="Collapse RSI legend"><Chev up /></Collapse></SubLegend>
              </Pane>
              <RsiAxis>
                <AxisRow>80.00</AxisRow><AxisRow>60.00</AxisRow><AxisRow>40.00</AxisRow>
              </RsiAxis>

              <Pane>
                <Plot>
                  <g transform="translate(-70 -831)" fill="none" strokeWidth="1.500">
                    <Sessions />
                    <polyline points={line(adx)} stroke="#a5133f" />
                    <polyline points={line(plus)} stroke="#3f55b8" />
                    <polyline points={line(minus)} stroke="#d0702c" />
                    <path d="M1375.500 831V897" stroke="#9a9a9c" strokeDasharray="5 5" strokeWidth="1" />
                  </g>
                </Plot>
                <DmiMark width="38" height="20" viewBox="0 0 38 20" aria-hidden="true"><path d="M0 1h16v18H9V8H0zM28 1h9l-8 18h-8z" fill="#8d8d8f" /><circle cx="21" cy="4" r="4" fill="#8d8d8f" /></DmiMark>
                <SubLegend>DMI 14 14<Num $c="#a5133f">37.4308</Num><Num $c="#4a60cf">32.5567</Num><Num $c="#e07a2c">14.4719</Num><Collapse aria-label="Collapse DMI legend"><Chev up /></Collapse></SubLegend>
              </Pane>
              <Axis><AxisRow $tall>25.0000</AxisRow></Axis>

              <TimeAxis>{times.map((t, i) => <span key={i}>{t}</span>)}</TimeAxis>
              <AxisCorner><Ico w={20} h={18} sw={1.5} d="M6 1h8l5 8-5 8H6L1 9z"><circle cx="10" cy="9" r="2.500" /></Ico></AxisCorner>
              <CrossPrice><PlainBtn aria-label="Add at price"><Ico w={22} h={22} d="M11 6v10M6 11h10"><circle cx="11" cy="11" r="9.500" /></Ico></PlainBtn>19586.90</CrossPrice>
              <CrossTime><span>Thu 20 Jul '23</span><span>15:15</span></CrossTime>
            </Chart>

            <RangeBar>
              <Cell $w={36}>1D</Cell><Cell $w={34}>5D</Cell><Cell $w={37}>1M</Cell><Cell $w={36}>3M</Cell><Cell $w={38}>6M</Cell><Cell $w={45}>YTD</Cell><Cell $w={34}>1Y</Cell><Cell $w={35}>5Y</Cell><Cell $w={34}>All</Cell>
              <Rule $gap />
              <Cell $w={58} aria-label="Go to date"><Ico w={24} h={28} sw={1.5} d="M2 12V6q0-2 2-2h17q2 0 2 2v18q0 2-2 2h-8M2 10h21M8 1v5M17 1v5M0 21h9M5 17l4 4-4 4" /></Cell>
              <Grow />
              <Cell $w={165} $big>12:49:56 (UTC+5:30)</Cell><Cell $w={57} $big>ETH</Cell><Rule /><Cell $w={71} $big>B-ADJ</Cell>
            </RangeBar>

            <Bottom>
              <Cell $w={132} $big>Stock Screener</Cell><Cell $w={24} aria-label="Screeners"><Chev /></Cell><Cell $w={134} $big>Pine Editor</Cell><Cell $w={149} $big>Strategy Tester</Cell><Cell $w={156} $big>Trading Panel</Cell>
              <Grow />
              <Cell $w={46} aria-label="Open panel"><Ico w={24} h={14} sw={1.5} d="M2 11l10-8 10 8" /></Cell>
              <Cell $w={46} aria-label="Maximize panel"><Ico w={22} h={22} sw={1.5} d="M1 7V3q0-2 2-2h16q2 0 2 2v4M1 15v4q0 2 2 2h16q2 0 2-2v-4" /></Cell>
              <Floating>
                <Grip><svg width="12" height="20" viewBox="0 0 12 20" fill="#b5b8c0" aria-hidden="true">{[2, 7, 12, 17].map(y => <g key={y}><rect x="1" y={y} width="2" height="2" /><rect x="8" y={y} width="2" height="2" /></g>)}</svg></Grip>
                {floats.map(([n, d, dots]) => (
                  <FloatBtn key={n} aria-label={n} $c={n === 'Cross' ? '#5a85ea' : undefined}>
                    <Ico w={34} h={34} d={d}><Dots at={dots} r={2.6} />{n === 'Arrow' && <path d="M27 9l-2 9-6-6z" fill="currentColor" />}</Ico>
                  </FloatBtn>
                ))}
              </Floating>
            </Bottom>
          </Center>

          <RightBar>
            {side.map(([n, ic]) => <SideBtn key={n} aria-label={n}>{ic}</SideBtn>)}
            <SideRule />
            {side2.map(([n, ic]) => <SideBtn key={n} aria-label={n}>{ic}{n === 'Live streams' && <LiveDot />}</SideBtn>)}
            <Grow />
            <SideBtn aria-label="Object tree"><Ico d="M18 3l15 12-15 11L3 15zM3 21l15 10 15-10M3 26l15 9 15-9" /></SideBtn>
            <SideBtn aria-label="Help"><Ico d="M12 14q0-6 6-6t6 5q0 3-3 5t-3 5"><circle cx="18" cy="18" r="15" /><circle cx="18" cy="27" r="2.500" /></Ico></SideBtn>
          </RightBar>
        </Body>
      </Workspace>
    </Page>
  );
}
